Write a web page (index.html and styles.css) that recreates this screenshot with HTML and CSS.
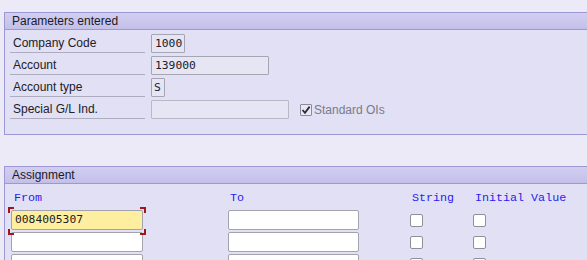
FILE: index.html
```html
<!DOCTYPE html>
<html lang="en">
<head>
    <meta charset="UTF-8">
    <title>Parameters entered</title>
    <link rel="stylesheet" href="styles.css">
</head>
<body>

    <div class="group params">
        <div class="group-title">Parameters entered</div>
        <div class="group-body">
            <div class="row">
                <div class="label">Company Code</div>
                <div class="field w-cc">1000</div>
            </div>
            <div class="row">
                <div class="label">Account</div>
                <div class="field w-acct">139000</div>
            </div>
            <div class="row">
                <div class="label">Account type</div>
                <div class="field w-type">S</div>
            </div>
            <div class="row">
                <div class="label">Special G/L Ind.</div>
                <div class="field w-sgl disabled"></div>
                <div class="check-wrap">
                    <span class="check checked">
                        <svg width="10" height="10" viewBox="0 0 10 10"><path d="M1.5 5 L4 7.8 L8.6 1.6" fill="none" stroke="#2a2a3a" stroke-width="1.8"/></svg>
                    </span>
                    <span class="check-label">Standard OIs</span>
                </div>
            </div>
        </div>
    </div>

    <div class="group assign">
        <div class="group-title">Assignment</div>
        <div class="group-body">
            <div class="grid head">
                <div class="col-head c-from">From</div>
                <div class="col-head c-to">To</div>
                <div class="col-head c-str">String</div>
                <div class="col-head c-init">Initial Value</div>
            </div>
            <div class="grid line">
                <div class="focus">
                    <div class="input from active">0084005307</div>
                    <span class="corner tl"></span>
                    <span class="corner tr"></span>
                    <span class="corner bl"></span>
                    <span class="corner br"></span>
                </div>
                <div class="input to"></div>
                <div class="cell"><span class="box"></span></div>
                <div class="cell"><span class="box"></span></div>
            </div>
            <div class="grid line">
                <div><div class="input from"></div></div>
                <div class="input to"></div>
                <div class="cell"><span class="box"></span></div>
                <div class="cell"><span class="box"></span></div>
            </div>
            <div class="grid line">
                <div><div class="input from"></div></div>
                <div class="input to"></div>
                <div class="cell"><span class="box"></span></div>
                <div class="cell"><span class="box"></span></div>
            </div>
        </div>
    </div>

</body>
</html>
```

FILE: styles.css
```css
html, body {
    margin: 0;
    padding: 0;
    overflow: hidden;
}
body {
    box-sizing: border-box;
    background: #ebeaf6;
    font-family: "Liberation Sans", Arial, sans-serif;
    font-size: 12px;
    color: #1c1c28;
    padding-top: 12px;
    height: 260px;
}
/* group boxes */
.group {
    margin-left: 4px;
    border: 1px solid #9d97d3;
    border-right: none;
    background: #e1e0f4;
}
.assign {
    box-sizing: border-box;
    margin-top: 31px;
    height: 94px;
    overflow: hidden;
    border-bottom: none;
}
.group-title {
    height: 16px;
    line-height: 16px;
    padding-left: 7px;
    font-size: 12px;
    color: #1a1a26;
    background: linear-gradient(#d2cef1, #c3bfe9);
    border-bottom: 1px solid #9d97d3;
}
.params .group-body {
    padding: 1px 0 15px 5px;
}
/* parameter rows */
.row {
    display: flex;
    height: 22px;
}
.label {
    width: 132px;
    height: 17px;
    padding: 4px 0 0 3px;
    line-height: 17px;
    border-bottom: 1px solid #aeadc0;
    color: #202028;
}
.field {
    box-sizing: border-box;
    height: 19px;
    margin: 3px 0 0 6px;
    padding-left: 3px;
    border: 1px solid #a6a5b3;
    border-radius: 1px;
    background: #e6e5f4;
    font-family: "DejaVu Sans Mono", monospace;
    font-size: 11.3px;
    line-height: 17px;
    color: #20202a;
}
.w-cc { width: 34px; }
.w-acct { width: 118px; }
.w-type { width: 14px; padding-left: 2px; }
.w-sgl { width: 138px; }
.disabled { border-color: #b9b8c8; }
.check-wrap {
    display: flex;
    align-items: center;
    margin: 3px 0 0 11px;
    height: 19px;
}
.check {
    box-sizing: border-box;
    width: 12px;
    height: 12px;
    border: 1px solid #8c8b99;
    border-radius: 1px;
    background: #e8e7f3;
    display: flex;
    align-items: center;
    justify-content: center;
}
.check-label {
    margin-left: 2px;
    color: #7b7a8a;
}
/* assignment table */
.assign .group-body {
    padding-left: 6px;
}
.grid {
    display: grid;
    grid-template-columns: 217px 182px 63px 1fr;
}
.head {
    padding: 6px 0 4px;
}
.col-head {
    font-family: "Liberation Mono", "Courier New", monospace;
    font-size: 11.7px;
    line-height: 16px;
    color: #2a1cf0;
    padding-left: 2px;
}
.c-from { padding-left: 3px; }
.line {
    height: 22px;
}
.input {
    box-sizing: border-box;
    height: 20px;
    border: 1px solid #a3a3ab;
    border-radius: 2px;
    background: #ffffff;
    font-family: "DejaVu Sans Mono", monospace;
    font-size: 11.3px;
    line-height: 18px;
    padding-left: 3px;
    color: #1e1e1e;
}
.input.from { width: 132px; }
.input.to { width: 131px; }
.input.active { background: #fdeea0; }
.focus {
    position: relative;
    width: 132px;
}
.corner {
    position: absolute;
    width: 4px;
    height: 4px;
    border: 0 solid #a3141c;
}
.corner.tl { left: -3px; top: -3px; border-top-width: 2px; border-left-width: 2px; }
.corner.tr { right: -3px; top: -3px; border-top-width: 2px; border-right-width: 2px; }
.corner.bl { left: -3px; bottom: -3px; border-bottom-width: 2px; border-left-width: 2px; }
.corner.br { right: -3px; bottom: -3px; border-bottom-width: 2px; border-right-width: 2px; }
.cell {
    padding-top: 4px;
}
.box {
    display: block;
    box-sizing: border-box;
    width: 13px;
    height: 13px;
    border: 1px solid #8f8f98;
    border-radius: 2px;
    background: #ffffff;
}
```
